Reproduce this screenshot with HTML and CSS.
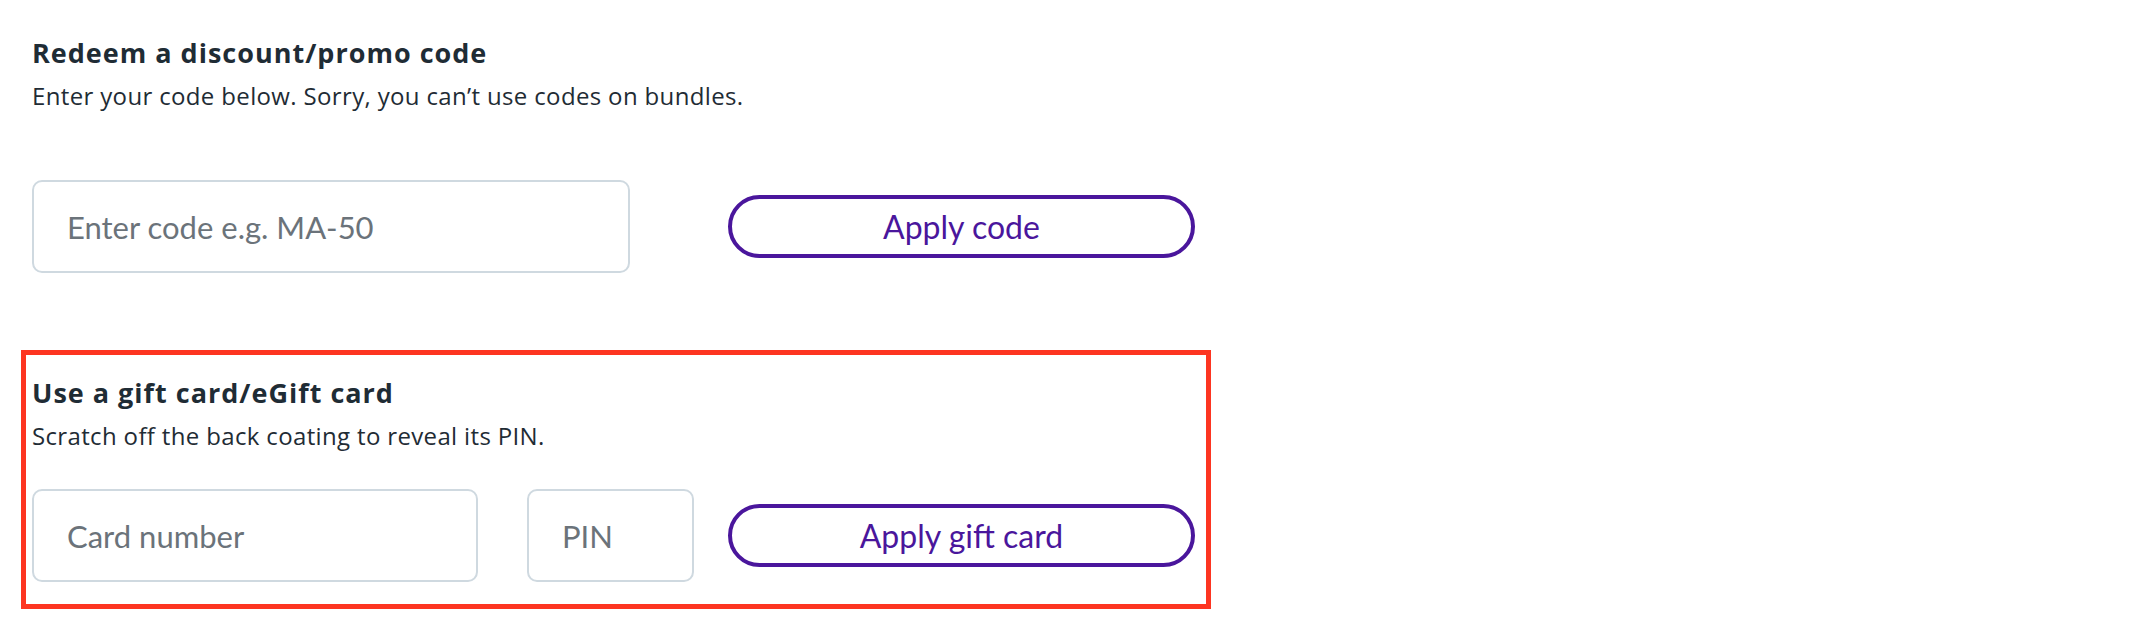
FILE: index.html
```html
<!DOCTYPE html>
<html lang="en">
<head>
<meta charset="utf-8">
<title>Redeem codes</title>
<link rel="stylesheet" href="styles.css">
</head>
<body>
<div class="page">
  <section class="promo">
    <h2 class="title">Redeem a discount/promo code</h2>
    <p class="subtitle">Enter your code below. Sorry, you can’t use codes on bundles.</p>
    <div class="row row-code">
      <input class="field field-code" type="text" placeholder="Enter code e.g. MA-50">
      <button class="btn" type="button">Apply code</button>
    </div>
  </section>
  <section class="gift">
    <h2 class="title">Use a gift card/eGift card</h2>
    <p class="subtitle">Scratch off the back coating to reveal its PIN.</p>
    <div class="row row-gift">
      <input class="field field-card" type="text" placeholder="Card number">
      <input class="field field-pin" type="text" placeholder="PIN">
      <button class="btn" type="button">Apply gift card</button>
    </div>
  </section>
</div>
</body>
</html>
```
FILE: styles.css
```css
* { box-sizing: border-box; }
html, body { margin: 0; padding: 0; background: #ffffff; }
body { font-family: Lato, "Open Sans", "Liberation Sans", sans-serif; color: #1f2c35; }

.page { padding: 0 0 0 21px; }

.promo { padding: 36px 0 0 11px; width: 1174px; }

.title {
  margin: 0;
  font-family: "Open Sans", Lato, sans-serif;
  font-size: 27px;
  line-height: 34px;
  font-weight: 700;
  letter-spacing: 1px;
  color: #1f2c35;
}
.subtitle {
  margin: 11px 0 0;
  font-family: "Open Sans", Lato, sans-serif;
  font-size: 24px;
  line-height: 30px;
  font-weight: 400;
  letter-spacing: 0.35px;
  color: #1f2c35;
}

.row { display: flex; align-items: center; }
.row-code { margin-top: 69px; justify-content: space-between; width: 1163px; }
.row-gift { margin-top: 38px; width: 1163px; }

.field {
  height: 93px;
  border: 2px solid #cfd9e0;
  border-radius: 10px;
  padding: 0 0 0 33px;
  font-family: inherit;
  font-size: 31px;
  color: #1f2c35;
  background: #fff;
  outline: none;
}
.field::placeholder { color: #6b737a; opacity: 1; }
.field-code { width: 598px; }
.field-card { width: 446px; }
.field-pin { width: 167px; margin-left: 49px; }
.row-gift .btn { margin-left: 34px; }

.btn {
  width: 467px;
  height: 63px;
  border: 4px solid #4a169c;
  border-radius: 32px;
  background: #fff;
  color: #4a169c;
  font-family: inherit;
  font-size: 32px;
  font-weight: 400;
  padding: 0;
  cursor: pointer;
}

.gift {
  margin-top: 77px;
  width: 1190px;
  border: 5px solid #fd3521;
  padding: 21px 11px 22px 6px;
}
```
